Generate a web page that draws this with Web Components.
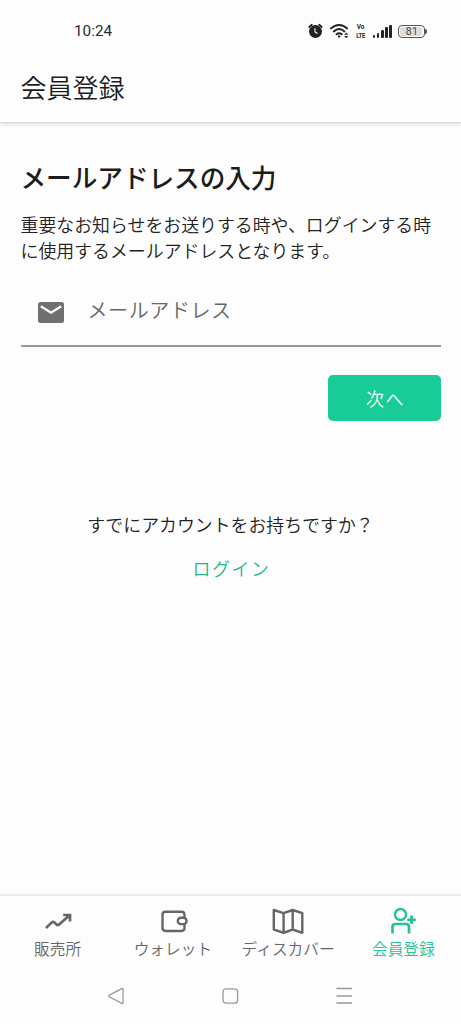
<!DOCTYPE html>
<html lang="ja">
<head>
<meta charset="utf-8">
<title>会員登録</title>
<style>
html, body { margin: 0; height: 100%; background: #fdfdfd; }
body { font-family: "Noto Sans CJK JP", sans-serif; font-weight: 350; color: #222; overflow: hidden; }
</style>
</head>
<body>
<signup-screen></signup-screen>
<script>
const define = (name, html) => customElements.define(name, class extends HTMLElement {
  constructor() {
    super();
    const t = document.createElement('template');
    t.innerHTML = html;
    this.attachShadow({ mode: 'open' }).append(t.content.cloneNode(true));
  }
});

define('status-bar', `<style>
:host { display: flex; height: 62px; box-sizing: border-box; padding: 0 34.500px 0 74px; align-items: center; justify-content: space-between; font-family: Roboto, sans-serif; color: #2b2b2b; }
time { font-size: 15.3px; line-height: 20px; font-weight: 400; }
.icons { display: flex; align-items: center; }
svg { display: block; }
.lte { display: grid; width: 10px; margin-left: 6.500px; font: 700 6px/8px Roboto, sans-serif; text-align: center; justify-content: center; transform: scaleY(1.1); }
.lte span:first-child { font-size: 6.600px; }
.lte span:last-child { letter-spacing: -.3px; }
.bars { display: flex; align-items: flex-end; gap: 1.600px; height: 13px; margin: 0 6px 0 7px; }
.bars i { width: 2.6px; border-radius: 1px; background: #222; }
.battery { width: 27px; height: 13px; box-sizing: border-box; border: 1px solid #555; border-radius: 4px; padding: 1px; }
.level { height: 9px; width: 22px; border-radius: 2px; background: #ddd; font: 10.500px/9.500px Roboto, sans-serif; text-align: center; color: #444; letter-spacing: .3px; padding-left: 2px; box-sizing: border-box; }
.cap { width: 1.5px; height: 5px; background: #555; border-radius: 0 2px 2px 0; }
</style>
<time>10:24</time>
<div class="icons">
<svg width="15" height="16" viewBox="0 0 15 16"><circle cx="7.5" cy="8.5" r="6.5" fill="#222"/><path d="M1.300 4 3.800 1.800M13.700 4 11.200 1.800" stroke="#222" stroke-width="1.800" stroke-linecap="round"/><path d="M7 5.2V9l2.6 1.5" fill="none" stroke="#fff" stroke-width="1.1"/></svg>
<svg style="margin-left:7px" width="19" height="16" viewBox="0 0 19 16" fill="none" stroke="#222" stroke-width="2" stroke-linecap="round"><path d="M1 5.4C5.8.7 12.5.7 17 5.4M3.8 8.4C7.3 5.2 11 5.2 14.3 8.4M6.6 11.3c1.7-1.4 3.4-1.4 5 0"/><circle cx="9.1" cy="13.4" r="1.2" fill="#222" stroke="none"/><path d="m14 11.7 2.2-2.2 2.2 2.2zM14 13l2.2 2.2L18.400 13z" fill="#333" stroke="none"/></svg>
<div class="lte"><span>Vo</span><span>LTE</span></div>
<div class="bars"><i style="height:3px"></i><i style="height:5px"></i><i style="height:8px"></i><i style="height:10.500px"></i><i style="height:13px"></i></div>
<div class="battery"><div class="level">81</div></div><div class="cap"></div>
</div>`);

define('app-header', `<style>
:host { display: flex; height: 61px; box-sizing: border-box; padding: 6px 20.500px 0; align-items: flex-start; border-bottom: 1px solid #dcdcdc; box-shadow: 0 1px 5px rgba(0,0,0,.15); clip-path: inset(0 0 -8px 0); background: #fdfdfd; }
h1 { margin: 0; font-size: 26px; line-height: 38px; font-weight: inherit; color: #1c1c1c; }
</style><h1><slot></slot></h1>`);

define('email-field', `<style>
:host { display: flex; box-sizing: border-box; height: 62px; border-bottom: 2px solid #999; padding: 0 17px; color: #666; }
svg { width: 26px; height: 21px; margin: 17px 24px 0 0; }
span { font-size: 20px; line-height: 30px; letter-spacing: .6px; margin-top: 10px; }
</style>
<svg viewBox="0 0 26 21"><rect width="26" height="21" rx="2.500" fill="#707070"/><path d="m2.800 4.200 10.200 6.400 10.200-6.400" fill="none" stroke="#fdfdfd" stroke-width="2.300"/></svg>
<span><slot></slot></span>`);

define('primary-button', `<style>
:host { display: block; }
button { display: block; width: 113px; height: 46px; border: 0; border-radius: 5px; padding: 0 0 0 3px; background: #19cb96; color: #f0fff9; font: 350 18px/46px "Noto Sans CJK JP", sans-serif; letter-spacing: 1.6px; }
</style><button><slot></slot></button>`);

define('tab-item', `<style>
:host { display: flex; flex-direction: column; align-items: center; flex: 1 1 0; min-width: 0; color: #666; }
::slotted(svg) { display: block; width: 36px; height: 32px; fill: none; stroke: currentColor; stroke-width: 2.400; }
span { font-size: 15.700px; line-height: 24px; white-space: nowrap; }
:host([active]) { color: #27c197; }
</style><slot name="icon"></slot><span><slot></slot></span>`);

define('tab-bar', `<style>
:host { display: flex; height: 74px; box-sizing: border-box; padding-top: 9px; border-top: 2px solid #ececec; }
</style>
<tab-item><svg slot="icon" viewBox="0 0 36 32"><path d="m6 23 5.800-5.600q1.300-1.200 2.600 0l2.100 2q1.300 1.200 2.600 0L29 10.700M23.200 10H30v6.500" stroke-width="2.700"/></svg>販売所</tab-item>
<tab-item><svg slot="icon" viewBox="0 0 36 32"><path d="M29.500 12.500V9.700Q29.500 6.700 26.500 6.700H10.500Q7.500 6.700 7.500 9.700v13.400q0 2.900 3 2.900h16q3 0 3-2.900V19.500"/><rect x="22.800" y="12.800" width="8.800" height="6.300" rx="3.150"/></svg>ウォレット</tab-item>
<tab-item><svg slot="icon" viewBox="0 0 36 32"><path d="m3.800 5 9.800 3.200L22.700 5 32.300 8.200V27.800L22.700 24.500l-9.100 3.300L3.800 24.500zM13.600 8.200v19.600M22.700 5v19.500" stroke-linejoin="round"/></svg>ディスカバー</tab-item>
<tab-item active><svg slot="icon" viewBox="0 0 36 32"><circle cx="15.500" cy="9.500" r="5.500"/><path d="M7.500 28.500v-6.500q0-3 3-3h10.500q3 0 3 3v6.500M26.500 10.500v8.600M22.200 14.800h8.600" stroke-width="2.700"/></svg>会員登録</tab-item>`);

define('system-nav', `<style>
:host { display: flex; height: 56px; justify-content: space-between; padding: 19px 108px 0 107px; box-sizing: border-box; }
svg { width: 18px; height: 18px; fill: none; stroke: #999; stroke-width: 1.300; overflow: visible; }
</style>
<svg viewBox="0 0 18 18"><path d="M2.200 8.200 14.800 1.600Q16 1 16 2.300v13.400q0 1.300-1.200.7L2.200 9.800q-1.200-.8 0-1.600z"/></svg>
<svg viewBox="0 0 18 18"><rect x="2" y="1.800" width="14.600" height="14.400" rx="3"/></svg>
<svg viewBox="0 0 18 18"><path d="M1.500 1.500h15.500M1.500 9h15.500M1.500 16h15.500"/></svg>`);

define('signup-screen', `<style>
:host { display: flex; flex-direction: column; width: 100%; height: 100vh; }
main { flex: 1; padding: 35px 20.500px 0; display: flex; flex-direction: column; }
h2 { margin: 0; font-size: 25.600px; line-height: 38px; font-weight: 500; color: #1c1c1c; }
p { margin: 0; }
.desc { font-size: 17.900px; line-height: 26px; margin-top: 15px; white-space: nowrap; }
email-field { margin-top: 22px; }
primary-button { align-self: flex-end; margin-top: 28px; }
.account { margin-top: 90px; text-align: center; font-size: 17.900px; line-height: 26px; }
.login { margin-top: 18px; padding-left: 2px; text-align: center; font-size: 18px; line-height: 26px; letter-spacing: 1.500px; color: #25b78b; }
</style>
<status-bar></status-bar>
<app-header>会員登録</app-header>
<main>
<h2>メールアドレスの入力</h2>
<p class="desc">重要なお知らせをお送りする時や、ログインする時<br>に使用するメールアドレスとなります。</p>
<email-field>メールアドレス</email-field>
<primary-button>次へ</primary-button>
<p class="account">すでにアカウントをお持ちですか？</p>
<p class="login">ログイン</p>
</main>
<tab-bar></tab-bar>
<system-nav></system-nav>`);
</script>
</body>
</html>
